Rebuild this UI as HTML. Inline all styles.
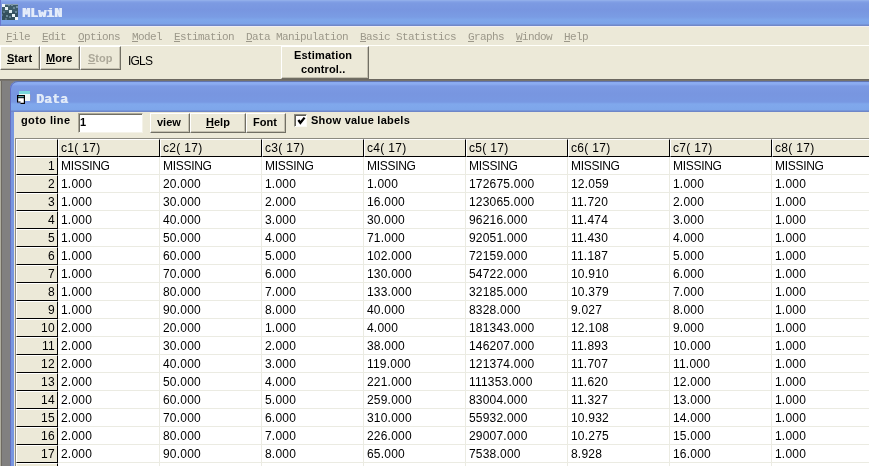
<!DOCTYPE html><html><head><meta charset="utf-8"><title>MLwiN</title><style>
*{margin:0;padding:0;box-sizing:border-box}
html,body{width:869px;height:466px;overflow:hidden;background:#ece9d8;position:relative;font-family:"Liberation Sans",sans-serif}
body{will-change:transform}
div,span,svg{position:absolute}
#tb{left:0;top:0;width:869px;height:27px;background:linear-gradient(to bottom,#9ab6ec 0px,#88a6e8 1px,#7c9ae2 3px,#7896e0 10px,#7a9ce4 17px,#7ea6ea 20px,#7ca2e8 24px,#7088c8 25px,#7088c8 26px,#f0eef2 26px,#f0eef2 27px)}
#tbl{left:0;top:0;width:1px;height:26px;background:#6a78d0}
#appicon{left:2px;top:4px}
#tbt{left:22px;top:7px;text-shadow:1px 0 0 #e4ecfa;font-family:"Liberation Mono",monospace;font-weight:bold;font-size:13px;color:#e4ecfa;line-height:14px;letter-spacing:0.2px}
.mi{top:30px;font-family:"Liberation Mono",monospace;font-size:11px;letter-spacing:-0.6px;color:#9c988a;line-height:14px;white-space:nowrap}
.mi u{text-decoration:underline}
#mline{left:0;top:45px;width:869px;height:1px;background:#fffffa}
.btn{background:#ece9d8;border-top:1px solid #fff;border-left:1px solid #fff;border-right:1px solid #716f64;border-bottom:1px solid #716f64;box-shadow:inset -1px -1px 0 #c4c0b0}
.btn span{top:5px;font-weight:bold;font-size:11px;line-height:13px;color:#000;white-space:nowrap}
.btn.dis span{color:#aca899}
#igls{left:128px;top:55px;font-size:12px;line-height:13px;color:#000;letter-spacing:-0.8px}
#estb .l1{left:12px;top:2px;font-weight:bold;font-size:11px;line-height:13px;letter-spacing:0.2px}
#estb .l2{left:19px;top:16px;font-weight:bold;font-size:11px;line-height:13px;letter-spacing:0.1px}
#tbbot{left:0;top:79px;width:869px;height:2px;background:linear-gradient(#6c6860 0px,#6c6860 1px,#76726c 1px)}
#mdi{left:0;top:81px;width:869px;height:385px;background:#818080;border-left:1px solid #b0aea0;box-shadow:inset 1px 0 0 #6e6a62}
#dw{left:10px;top:81px;width:900px;height:400px;background:#7896e0;border-top-left-radius:8px;overflow:hidden;box-shadow:inset 1px 1px 0 #6070b0}
#dwt{left:0;top:0;width:900px;height:31px;border-top-left-radius:8px;background:linear-gradient(to bottom,#6c80b4 0px,#6c80b4 1px,#8aaaf0 1px,#8cacf0 3px,#7c9ae4 5px,#7896e0 13px,#7898e2 21px,#80a8ec 23px,#7ea6ea 29px,#6e86c8 30px,#6e86c8 31px)}
#dicon{left:7px;top:10px}
#dwtt{left:26px;top:12px;text-shadow:0.8px 0 0 #e0eaf8;font-family:"Liberation Mono",monospace;font-weight:bold;font-size:13px;color:#e0eaf8;line-height:14px;letter-spacing:0.2px}
#dcl{left:4px;top:31px;width:900px;height:400px;background:#ece9d8}
#goto{left:21px;top:114px;font-weight:bold;font-size:11px;line-height:13px;letter-spacing:0.4px}
#tbox{left:78px;top:113px;width:65px;height:20px;background:#fff;border-top:1px solid #aca899;border-left:1px solid #aca899;border-right:1px solid #f4f2e8;border-bottom:1px solid #f4f2e8;box-shadow:inset 1px 1px 0 #716f64;font-weight:bold;font-size:11px;line-height:13px;padding:2px 0 0 1px}
#chk{left:294px;top:114px;width:13px;height:13px;background:#fff;border-top:1px solid #8c8a80;border-left:1px solid #8c8a80;border-right:1px solid #fbfaf4;border-bottom:1px solid #fbfaf4;box-shadow:inset 1px 1px 0 #5e5c54}
#chk svg{left:-1px;top:-1px}
#svl{left:311px;top:114px;font-weight:bold;font-size:11px;line-height:13px;white-space:nowrap;letter-spacing:0.25px}
#grid{left:15px;top:138px;width:900px;height:400px;background:#fff;border-top:1px solid #8c8a80;border-left:1px solid #8c8a80;overflow:hidden}
.hc{background:#ece9d8;border-top:1px solid #fff;border-left:1px solid #fff;border-right:1px solid #000;border-bottom:1px solid #000}
.hc span{left:2px;top:2px;font-size:12px;line-height:13px;color:#000;white-space:pre;letter-spacing:0.3px}
.hc.rh span{left:auto;right:2px;top:2px;letter-spacing:0.3px}
.dc{width:102px;height:18px;border-right:1px solid #ebebe2;border-bottom:1px solid #ebebe2}
.dc span{left:3px;top:3px;font-size:12px;line-height:13px;color:#000;white-space:nowrap;letter-spacing:0.2px}
.dc span.m{letter-spacing:-0.3px}
#dwb{left:0;top:0;width:900px;height:400px;border-top:1px solid #6074b0;border-left:1px solid #6470c0;border-top-left-radius:8px}

</style></head><body>
<div id="tb"><div id="tbl"></div>
<svg id="appicon" width="16" height="16" viewBox="0 0 16 16"><rect x="0" y="0" width="16" height="16" fill="#3e5c6a"/><rect x="0" y="0" width="16" height="1" fill="#8aa0b0"/><rect x="0" y="8" width="16" height="8" fill="#34505e"/><rect x="0" y="0" width="3" height="3" fill="#eef4f8"/><rect x="3" y="3" width="3" height="3" fill="#e8f2f6"/><rect x="7" y="6" width="3" height="3" fill="#dceaee"/><rect x="10" y="10" width="3" height="3" fill="#e8f2f6"/><rect x="13" y="13" width="3" height="3" fill="#f0f6f8"/><rect x="6" y="1" width="2" height="1" fill="#6a8898"/><rect x="9" y="0" width="2" height="2" fill="#7894a4"/><rect x="11" y="3" width="2" height="2" fill="#6a8898"/><rect x="14" y="2" width="2" height="2" fill="#7894a4"/><rect x="1" y="7" width="2" height="2" fill="#5e7c8c"/><rect x="0" y="10" width="1" height="2" fill="#56707e"/><rect x="4" y="11" width="2" height="2" fill="#6a8898"/><rect x="13" y="7" width="2" height="2" fill="#6a8898"/><rect x="7" y="12" width="2" height="2" fill="#5e7c8c"/><rect x="3" y="14" width="2" height="2" fill="#56707e"/></svg>
<div id="tbt">MLwiN</div></div>
<div class="mi" style="left:6px"><u>F</u>ile</div>
<div class="mi" style="left:42px"><u>E</u>dit</div>
<div class="mi" style="left:78px"><u>O</u>ptions</div>
<div class="mi" style="left:132px"><u>M</u>odel</div>
<div class="mi" style="left:174px"><u>E</u>stimation</div>
<div class="mi" style="left:246px"><u>D</u>ata Manipulation</div>
<div class="mi" style="left:360px"><u>B</u>asic Statistics</div>
<div class="mi" style="left:468px"><u>G</u>raphs</div>
<div class="mi" style="left:516px"><u>W</u>indow</div>
<div class="mi" style="left:564px"><u>H</u>elp</div>
<div id="mline"></div>
<div class="btn" style="left:0;top:46px;width:40px;height:24px"><span style="left:6px"><u>S</u>tart</span></div>
<div class="btn" style="left:40px;top:46px;width:40px;height:24px"><span style="left:5px"><u>M</u>ore</span></div>
<div class="btn dis" style="left:80px;top:46px;width:41px;height:24px"><span style="left:7px"><u>S</u>top</span></div>
<div id="igls">IGLS</div>
<div class="btn" id="estb" style="left:281px;top:46px;width:88px;height:33px"><div class="l1">Estimation</div><div class="l2">control..</div></div>
<div id="tbbot"></div>
<div id="mdi"></div>
<div id="dw"><div id="dwt"></div>
<svg id="dicon" width="16" height="16" viewBox="0 0 16 16"><rect x="2" y="0" width="11" height="10" fill="#eef8f6"/><rect x="2" y="0" width="11" height="3" fill="#78d8dc"/><rect x="13" y="4" width="1" height="6" fill="#8c98c8"/><rect x="0" y="4" width="8" height="9" fill="#000"/><rect x="1.2" y="5.2" width="5.6" height="1" fill="#70c8d0"/><rect x="1.2" y="7.2" width="5.6" height="4.6" fill="#fff"/><rect x="0" y="11.5" width="3.5" height="1.5" fill="#7896e0"/><rect x="1.2" y="10.5" width="2.3" height="1" fill="#000"/></svg>
<div id="dwtt">Data</div>
<div id="dcl"></div><div id="dwb"></div>
</div>
<div id="goto">goto line</div>
<div id="tbox">1</div>
<div class="btn" style="left:150px;top:113px;width:40px;height:20px"><span style="left:6px;top:2px">view</span></div>
<div class="btn" style="left:190px;top:113px;width:56px;height:20px"><span style="left:15px;top:2px"><u>H</u>elp</span></div>
<div class="btn" style="left:246px;top:113px;width:40px;height:20px"><span style="left:6px;top:2px">Font</span></div>
<div id="chk"><svg width="13" height="13" viewBox="0 0 13 13"><path d="M4.4 6L6.4 8.8L10.6 3.6" fill="none" stroke="#000" stroke-width="2.3"/></svg></div>
<div id="svl">Show value labels</div>
<div id="grid">
<div class="hc rh" style="left:0;top:0;width:42px;height:18px"></div>
<div class="hc" style="left:42px;top:0;width:102px;height:18px"><span>c1( 17)</span></div>
<div class="hc" style="left:144px;top:0;width:102px;height:18px"><span>c2( 17)</span></div>
<div class="hc" style="left:246px;top:0;width:102px;height:18px"><span>c3( 17)</span></div>
<div class="hc" style="left:348px;top:0;width:102px;height:18px"><span>c4( 17)</span></div>
<div class="hc" style="left:450px;top:0;width:102px;height:18px"><span>c5( 17)</span></div>
<div class="hc" style="left:552px;top:0;width:102px;height:18px"><span>c6( 17)</span></div>
<div class="hc" style="left:654px;top:0;width:102px;height:18px"><span>c7( 17)</span></div>
<div class="hc" style="left:756px;top:0;width:102px;height:18px"><span>c8( 17)</span></div>
<div class="hc rh" style="left:0;top:18px;width:42px;height:18px"><span>1</span></div>
<div class="dc" style="left:42px;top:18px"><span class="m">MISSING</span></div>
<div class="dc" style="left:144px;top:18px"><span class="m">MISSING</span></div>
<div class="dc" style="left:246px;top:18px"><span class="m">MISSING</span></div>
<div class="dc" style="left:348px;top:18px"><span class="m">MISSING</span></div>
<div class="dc" style="left:450px;top:18px"><span class="m">MISSING</span></div>
<div class="dc" style="left:552px;top:18px"><span class="m">MISSING</span></div>
<div class="dc" style="left:654px;top:18px"><span class="m">MISSING</span></div>
<div class="dc" style="left:756px;top:18px"><span class="m">MISSING</span></div>
<div class="hc rh" style="left:0;top:36px;width:42px;height:18px"><span>2</span></div>
<div class="dc" style="left:42px;top:36px"><span>1.000</span></div>
<div class="dc" style="left:144px;top:36px"><span>20.000</span></div>
<div class="dc" style="left:246px;top:36px"><span>1.000</span></div>
<div class="dc" style="left:348px;top:36px"><span>1.000</span></div>
<div class="dc" style="left:450px;top:36px"><span>172675.000</span></div>
<div class="dc" style="left:552px;top:36px"><span>12.059</span></div>
<div class="dc" style="left:654px;top:36px"><span>1.000</span></div>
<div class="dc" style="left:756px;top:36px"><span>1.000</span></div>
<div class="hc rh" style="left:0;top:54px;width:42px;height:18px"><span>3</span></div>
<div class="dc" style="left:42px;top:54px"><span>1.000</span></div>
<div class="dc" style="left:144px;top:54px"><span>30.000</span></div>
<div class="dc" style="left:246px;top:54px"><span>2.000</span></div>
<div class="dc" style="left:348px;top:54px"><span>16.000</span></div>
<div class="dc" style="left:450px;top:54px"><span>123065.000</span></div>
<div class="dc" style="left:552px;top:54px"><span>11.720</span></div>
<div class="dc" style="left:654px;top:54px"><span>2.000</span></div>
<div class="dc" style="left:756px;top:54px"><span>1.000</span></div>
<div class="hc rh" style="left:0;top:72px;width:42px;height:18px"><span>4</span></div>
<div class="dc" style="left:42px;top:72px"><span>1.000</span></div>
<div class="dc" style="left:144px;top:72px"><span>40.000</span></div>
<div class="dc" style="left:246px;top:72px"><span>3.000</span></div>
<div class="dc" style="left:348px;top:72px"><span>30.000</span></div>
<div class="dc" style="left:450px;top:72px"><span>96216.000</span></div>
<div class="dc" style="left:552px;top:72px"><span>11.474</span></div>
<div class="dc" style="left:654px;top:72px"><span>3.000</span></div>
<div class="dc" style="left:756px;top:72px"><span>1.000</span></div>
<div class="hc rh" style="left:0;top:90px;width:42px;height:18px"><span>5</span></div>
<div class="dc" style="left:42px;top:90px"><span>1.000</span></div>
<div class="dc" style="left:144px;top:90px"><span>50.000</span></div>
<div class="dc" style="left:246px;top:90px"><span>4.000</span></div>
<div class="dc" style="left:348px;top:90px"><span>71.000</span></div>
<div class="dc" style="left:450px;top:90px"><span>92051.000</span></div>
<div class="dc" style="left:552px;top:90px"><span>11.430</span></div>
<div class="dc" style="left:654px;top:90px"><span>4.000</span></div>
<div class="dc" style="left:756px;top:90px"><span>1.000</span></div>
<div class="hc rh" style="left:0;top:108px;width:42px;height:18px"><span>6</span></div>
<div class="dc" style="left:42px;top:108px"><span>1.000</span></div>
<div class="dc" style="left:144px;top:108px"><span>60.000</span></div>
<div class="dc" style="left:246px;top:108px"><span>5.000</span></div>
<div class="dc" style="left:348px;top:108px"><span>102.000</span></div>
<div class="dc" style="left:450px;top:108px"><span>72159.000</span></div>
<div class="dc" style="left:552px;top:108px"><span>11.187</span></div>
<div class="dc" style="left:654px;top:108px"><span>5.000</span></div>
<div class="dc" style="left:756px;top:108px"><span>1.000</span></div>
<div class="hc rh" style="left:0;top:126px;width:42px;height:18px"><span>7</span></div>
<div class="dc" style="left:42px;top:126px"><span>1.000</span></div>
<div class="dc" style="left:144px;top:126px"><span>70.000</span></div>
<div class="dc" style="left:246px;top:126px"><span>6.000</span></div>
<div class="dc" style="left:348px;top:126px"><span>130.000</span></div>
<div class="dc" style="left:450px;top:126px"><span>54722.000</span></div>
<div class="dc" style="left:552px;top:126px"><span>10.910</span></div>
<div class="dc" style="left:654px;top:126px"><span>6.000</span></div>
<div class="dc" style="left:756px;top:126px"><span>1.000</span></div>
<div class="hc rh" style="left:0;top:144px;width:42px;height:18px"><span>8</span></div>
<div class="dc" style="left:42px;top:144px"><span>1.000</span></div>
<div class="dc" style="left:144px;top:144px"><span>80.000</span></div>
<div class="dc" style="left:246px;top:144px"><span>7.000</span></div>
<div class="dc" style="left:348px;top:144px"><span>133.000</span></div>
<div class="dc" style="left:450px;top:144px"><span>32185.000</span></div>
<div class="dc" style="left:552px;top:144px"><span>10.379</span></div>
<div class="dc" style="left:654px;top:144px"><span>7.000</span></div>
<div class="dc" style="left:756px;top:144px"><span>1.000</span></div>
<div class="hc rh" style="left:0;top:162px;width:42px;height:18px"><span>9</span></div>
<div class="dc" style="left:42px;top:162px"><span>1.000</span></div>
<div class="dc" style="left:144px;top:162px"><span>90.000</span></div>
<div class="dc" style="left:246px;top:162px"><span>8.000</span></div>
<div class="dc" style="left:348px;top:162px"><span>40.000</span></div>
<div class="dc" style="left:450px;top:162px"><span>8328.000</span></div>
<div class="dc" style="left:552px;top:162px"><span>9.027</span></div>
<div class="dc" style="left:654px;top:162px"><span>8.000</span></div>
<div class="dc" style="left:756px;top:162px"><span>1.000</span></div>
<div class="hc rh" style="left:0;top:180px;width:42px;height:18px"><span>10</span></div>
<div class="dc" style="left:42px;top:180px"><span>2.000</span></div>
<div class="dc" style="left:144px;top:180px"><span>20.000</span></div>
<div class="dc" style="left:246px;top:180px"><span>1.000</span></div>
<div class="dc" style="left:348px;top:180px"><span>4.000</span></div>
<div class="dc" style="left:450px;top:180px"><span>181343.000</span></div>
<div class="dc" style="left:552px;top:180px"><span>12.108</span></div>
<div class="dc" style="left:654px;top:180px"><span>9.000</span></div>
<div class="dc" style="left:756px;top:180px"><span>1.000</span></div>
<div class="hc rh" style="left:0;top:198px;width:42px;height:18px"><span>11</span></div>
<div class="dc" style="left:42px;top:198px"><span>2.000</span></div>
<div class="dc" style="left:144px;top:198px"><span>30.000</span></div>
<div class="dc" style="left:246px;top:198px"><span>2.000</span></div>
<div class="dc" style="left:348px;top:198px"><span>38.000</span></div>
<div class="dc" style="left:450px;top:198px"><span>146207.000</span></div>
<div class="dc" style="left:552px;top:198px"><span>11.893</span></div>
<div class="dc" style="left:654px;top:198px"><span>10.000</span></div>
<div class="dc" style="left:756px;top:198px"><span>1.000</span></div>
<div class="hc rh" style="left:0;top:216px;width:42px;height:18px"><span>12</span></div>
<div class="dc" style="left:42px;top:216px"><span>2.000</span></div>
<div class="dc" style="left:144px;top:216px"><span>40.000</span></div>
<div class="dc" style="left:246px;top:216px"><span>3.000</span></div>
<div class="dc" style="left:348px;top:216px"><span>119.000</span></div>
<div class="dc" style="left:450px;top:216px"><span>121374.000</span></div>
<div class="dc" style="left:552px;top:216px"><span>11.707</span></div>
<div class="dc" style="left:654px;top:216px"><span>11.000</span></div>
<div class="dc" style="left:756px;top:216px"><span>1.000</span></div>
<div class="hc rh" style="left:0;top:234px;width:42px;height:18px"><span>13</span></div>
<div class="dc" style="left:42px;top:234px"><span>2.000</span></div>
<div class="dc" style="left:144px;top:234px"><span>50.000</span></div>
<div class="dc" style="left:246px;top:234px"><span>4.000</span></div>
<div class="dc" style="left:348px;top:234px"><span>221.000</span></div>
<div class="dc" style="left:450px;top:234px"><span>111353.000</span></div>
<div class="dc" style="left:552px;top:234px"><span>11.620</span></div>
<div class="dc" style="left:654px;top:234px"><span>12.000</span></div>
<div class="dc" style="left:756px;top:234px"><span>1.000</span></div>
<div class="hc rh" style="left:0;top:252px;width:42px;height:18px"><span>14</span></div>
<div class="dc" style="left:42px;top:252px"><span>2.000</span></div>
<div class="dc" style="left:144px;top:252px"><span>60.000</span></div>
<div class="dc" style="left:246px;top:252px"><span>5.000</span></div>
<div class="dc" style="left:348px;top:252px"><span>259.000</span></div>
<div class="dc" style="left:450px;top:252px"><span>83004.000</span></div>
<div class="dc" style="left:552px;top:252px"><span>11.327</span></div>
<div class="dc" style="left:654px;top:252px"><span>13.000</span></div>
<div class="dc" style="left:756px;top:252px"><span>1.000</span></div>
<div class="hc rh" style="left:0;top:270px;width:42px;height:18px"><span>15</span></div>
<div class="dc" style="left:42px;top:270px"><span>2.000</span></div>
<div class="dc" style="left:144px;top:270px"><span>70.000</span></div>
<div class="dc" style="left:246px;top:270px"><span>6.000</span></div>
<div class="dc" style="left:348px;top:270px"><span>310.000</span></div>
<div class="dc" style="left:450px;top:270px"><span>55932.000</span></div>
<div class="dc" style="left:552px;top:270px"><span>10.932</span></div>
<div class="dc" style="left:654px;top:270px"><span>14.000</span></div>
<div class="dc" style="left:756px;top:270px"><span>1.000</span></div>
<div class="hc rh" style="left:0;top:288px;width:42px;height:18px"><span>16</span></div>
<div class="dc" style="left:42px;top:288px"><span>2.000</span></div>
<div class="dc" style="left:144px;top:288px"><span>80.000</span></div>
<div class="dc" style="left:246px;top:288px"><span>7.000</span></div>
<div class="dc" style="left:348px;top:288px"><span>226.000</span></div>
<div class="dc" style="left:450px;top:288px"><span>29007.000</span></div>
<div class="dc" style="left:552px;top:288px"><span>10.275</span></div>
<div class="dc" style="left:654px;top:288px"><span>15.000</span></div>
<div class="dc" style="left:756px;top:288px"><span>1.000</span></div>
<div class="hc rh" style="left:0;top:306px;width:42px;height:18px"><span>17</span></div>
<div class="dc" style="left:42px;top:306px"><span>2.000</span></div>
<div class="dc" style="left:144px;top:306px"><span>90.000</span></div>
<div class="dc" style="left:246px;top:306px"><span>8.000</span></div>
<div class="dc" style="left:348px;top:306px"><span>65.000</span></div>
<div class="dc" style="left:450px;top:306px"><span>7538.000</span></div>
<div class="dc" style="left:552px;top:306px"><span>8.928</span></div>
<div class="dc" style="left:654px;top:306px"><span>16.000</span></div>
<div class="dc" style="left:756px;top:306px"><span>1.000</span></div>
<div class="hc rh" style="left:0;top:324px;width:42px;height:18px"><span></span></div>
<div class="dc" style="left:42px;top:324px"><span></span></div>
<div class="dc" style="left:144px;top:324px"><span></span></div>
<div class="dc" style="left:246px;top:324px"><span></span></div>
<div class="dc" style="left:348px;top:324px"><span></span></div>
<div class="dc" style="left:450px;top:324px"><span></span></div>
<div class="dc" style="left:552px;top:324px"><span></span></div>
<div class="dc" style="left:654px;top:324px"><span></span></div>
<div class="dc" style="left:756px;top:324px"><span></span></div>
</div>
</body></html>
